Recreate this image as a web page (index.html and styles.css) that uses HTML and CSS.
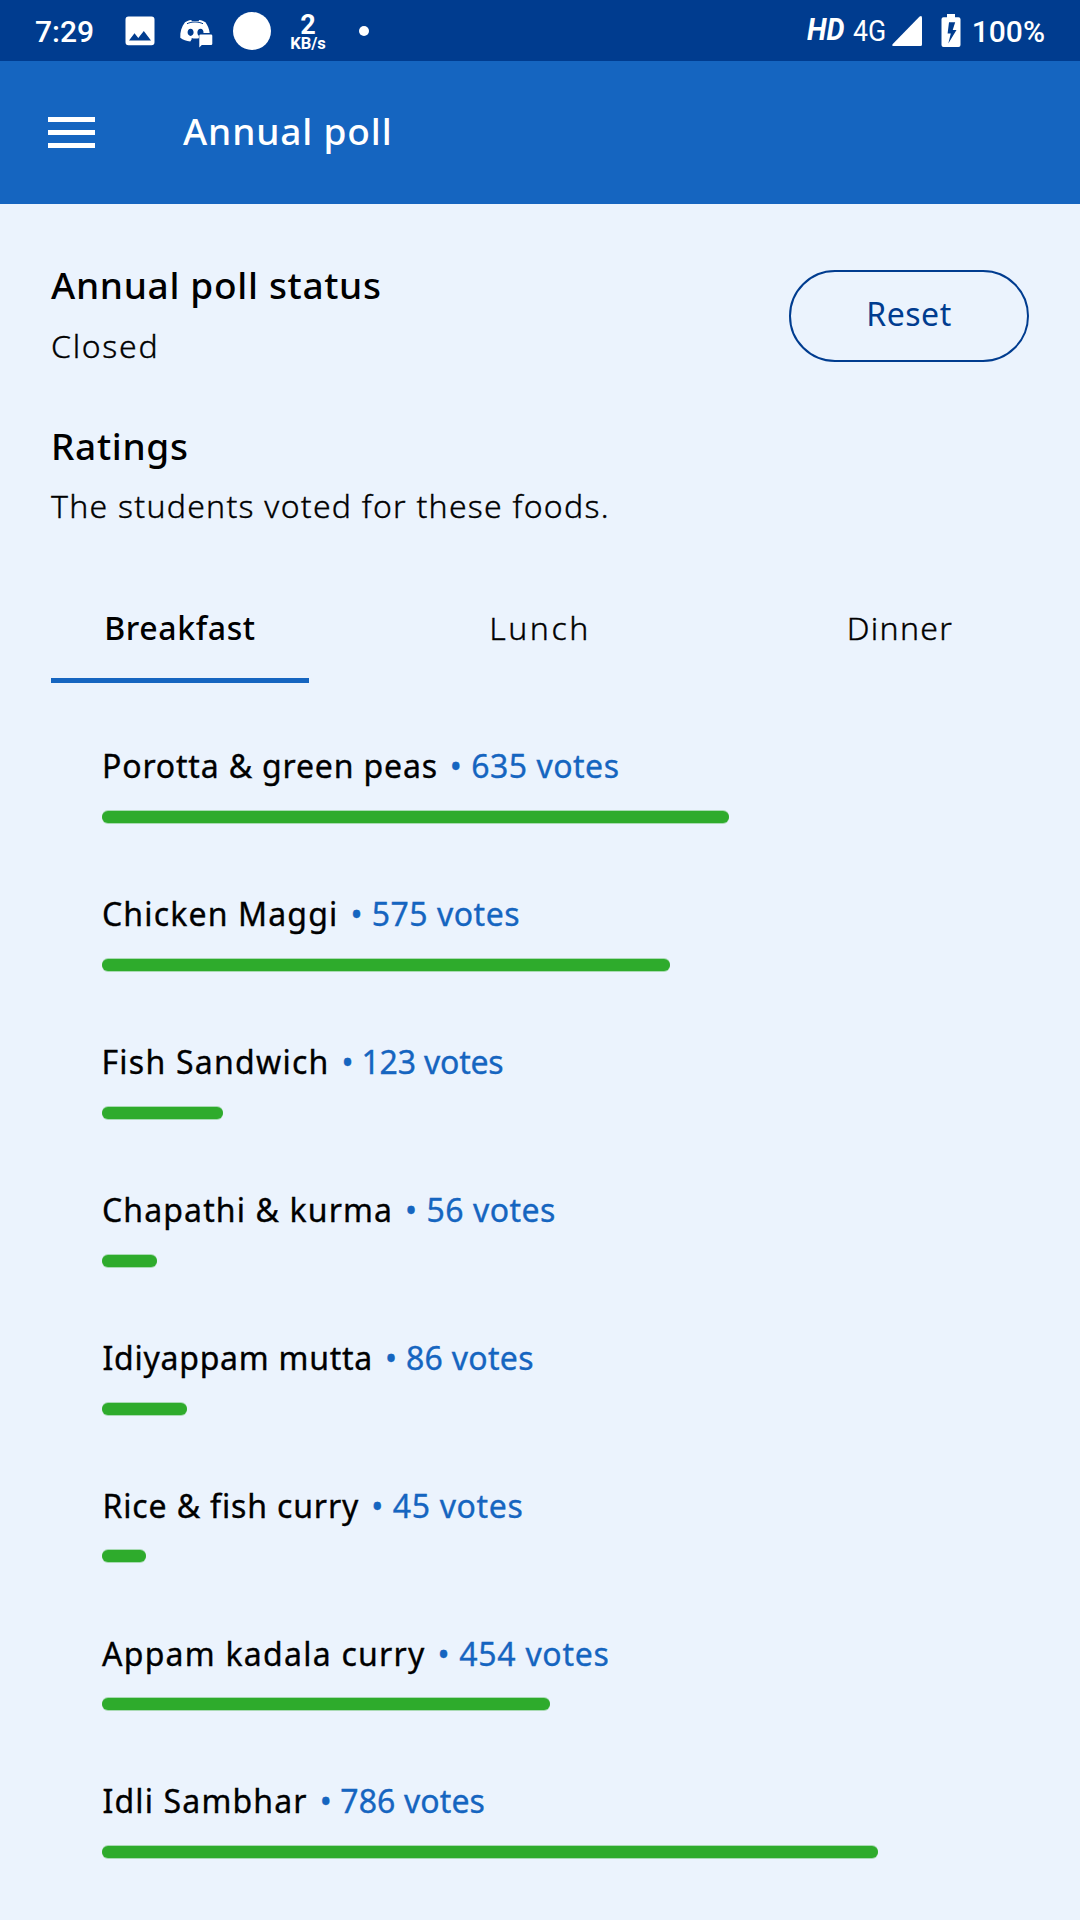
FILE: index.html
```html
<!DOCTYPE html>
<html lang="en">
<head>
<meta charset="utf-8">
<title>Annual poll</title>
<link rel="stylesheet" href="styles.css">
</head>
<body>
<div class="status-bar">
  <div class="status-left">
    <span class="clock">7:29</span>
    <svg class="icon-picture" width="30" height="30" viewBox="0 0 30 30"><path fill="#fff" fill-rule="evenodd" d="M3.5.5h23a3 3 0 0 1 3 3v22.700a3 3 0 0 1-3 3h-23a3 3 0 0 1-3-3V3.500a3 3 0 0 1 3-3zM4 24.500h22l-7.200-9.500-5.500 7-3.800-4.800z"/></svg>
    <svg class="icon-discord" width="33" height="30" viewBox="0 0 33 30">
      <path fill="#fff" fill-rule="evenodd" d="M5 3.300C7 2 9 1.300 11.200 1l.8 1.200c2-.4 4.500-.4 6.500 0l.8-1.200c2.200.3 4.200 1 6.200 2.300 2.200 3.200 3.700 6.700 4.200 10.700H23.500c.2-2.500-1-4.200-2.900-4.200-1.900 0-3.200 1.500-3.200 3.600 0 1.600.5 2.700 1.500 3.300v2.600c-2.500.5-5 .4-7.400-.2l.3 1-1.500 2.300C6.500 22 3 21 .300 18.800 0 13 1.500 8 5 3.300zM10.600 9.700c-1.800 0-3 1.600-3 3.600s1.300 3.600 3 3.600 3-1.600 3-3.600-1.200-3.600-3-3.600z"/>
      <path fill="none" stroke="#003c8f" stroke-width="1" d="M7 4.700c5-2.300 11-2.300 16 0"/>
      <path fill="#fff" d="M20.500 15.500H31a1.300 1.300 0 0 1 1.300 1.300v8a1.300 1.300 0 0 1-1.300 1.300H21.800L19.300 28.500V16.800a1.300 1.300 0 0 1 1.200-1.300z"/>
    </svg>
    <span class="disc"></span>
    <span class="speed"><b class="speed-value">2</b><b class="speed-unit">KB/s</b></span>
    <span class="more-dot"></span>
  </div>
  <div class="status-right">
    <span class="hd">HD</span>
    <span class="network">4G</span>
    <svg class="icon-signal" width="30" height="30" viewBox="0 0 30 30"><path fill="#fff" d="M27.600.600Q30-1 30 2v26.500Q30 30 28.500 30H1.500Q-.8 30 .8 28z"/></svg>
    <svg class="icon-battery" width="20" height="33" viewBox="0 0 20 33"><path fill="#fff" fill-rule="evenodd" d="M6 0h8v3.300h3.500a2 2 0 0 1 2 2V31a2 2 0 0 1-2 2h-15a2 2 0 0 1-2-2V5.300a2 2 0 0 1 2-2H6zM8 8.300 6.600 19.500h3.200L7.300 29.500 15.500 16h-3.800l2.500-7.700z"/></svg>
    <span class="battery-level">100%</span>
  </div>
</div>
<header class="app-bar">
  <div class="menu"><i></i><i></i><i></i></div>
  <h1 class="app-title">Annual poll</h1>
</header>
<main class="content">
  <section class="poll-status">
    <div>
      <h2 class="heading">Annual poll status</h2>
      <p class="body-text closed">Closed</p>
    </div>
    <button class="reset">Reset</button>
  </section>
  <section class="ratings">
    <h2 class="heading">Ratings</h2>
    <p class="body-text note">The students voted for these foods.</p>
  </section>
  <nav class="tabs">
    <a class="tab active">Breakfast</a>
    <a class="tab lunch">Lunch</a>
    <a class="tab dinner">Dinner</a>
  </nav>
  <ul class="foods">
    <li class="food porotta"><div class="label"><span class="name">Porotta &amp; green peas</span><span class="votes">• 635 votes</span></div><div class="bar" style="width:627px"></div></li>
    <li class="food maggi"><div class="label"><span class="name">Chicken Maggi</span><span class="votes">• 575 votes</span></div><div class="bar" style="width:568px"></div></li>
    <li class="food sandwich"><div class="label"><span class="name">Fish Sandwich</span><span class="votes">• 123 votes</span></div><div class="bar" style="width:121px"></div></li>
    <li class="food chapathi"><div class="label"><span class="name">Chapathi &amp; kurma</span><span class="votes">• 56 votes</span></div><div class="bar" style="width:55px"></div></li>
    <li class="food idiyappam"><div class="label"><span class="name">Idiyappam mutta</span><span class="votes">• 86 votes</span></div><div class="bar" style="width:85px"></div></li>
    <li class="food rice"><div class="label"><span class="name">Rice &amp; fish curry</span><span class="votes">• 45 votes</span></div><div class="bar" style="width:44px"></div></li>
    <li class="food appam"><div class="label"><span class="name">Appam kadala curry</span><span class="votes">• 454 votes</span></div><div class="bar" style="width:448px"></div></li>
    <li class="food idli"><div class="label"><span class="name">Idli Sambhar</span><span class="votes">• 786 votes</span></div><div class="bar" style="width:776px"></div></li>
  </ul>
</main>
</body>
</html>
```
FILE: styles.css
```css
* { box-sizing: border-box; margin: 0; padding: 0; }

body {
  width: 1080px;
  height: 1920px;
  overflow: hidden;
  background: #ebf3fd;
  color: #000;
  font-family: "Noto Sans", sans-serif;
  font-size: 32px;
  line-height: 40px;
}

/* System status bar */
.status-bar {
  display: flex;
  justify-content: space-between;
  height: 61px;
  padding: 0 35px;
  background: #003c8f;
  color: #fff;
  font: 500 30px/36px Roboto, sans-serif;
}
.status-left, .status-right { display: flex; align-items: center; height: 61px; }
.status-bar svg { display: block; flex: none; }
.clock { width: 90px; padding-top: 2px; letter-spacing: 0; }
.icon-picture { margin-right: 25px; }
.icon-discord { margin: 6px 20px 0 0; }
.disc { width: 38px; height: 38px; margin-right: 18px; border-radius: 50%; background: #fff; }
.speed { display: flex; flex-direction: column; align-items: center; width: 38px; margin-right: 32px; padding-top: 3px; }
.speed-value { font-size: 27px; line-height: 23px; }
.speed-unit { font-size: 16.5px; line-height: 14px; }
.more-dot { width: 10px; height: 10px; border-radius: 50%; background: #fff; }
.hd { width: 46px; padding-bottom: 2px; font-size: 31px; font-weight: 700; font-style: italic; transform: scaleX(.92); transform-origin: left; }
.network { width: 39px; padding-top: 1px; font-weight: 400; transform: scaleX(.89); transform-origin: left; }
.icon-signal { margin-right: 19px; }
.icon-battery { margin-right: 11px; }
.battery-level { padding-top: 2px; }

/* App bar */
.app-bar {
  display: flex;
  align-items: center;
  height: 143px;
  padding-left: 48px;
  background: #1565c0;
  color: #fff;
}
.menu { display: flex; flex-direction: column; gap: 8px; width: 47px; margin-right: 88px; }
.menu i { height: 5px; background: #fff; }
.app-title { padding-bottom: 3px; font-size: 37px; font-weight: 500; line-height: 48px; letter-spacing: .85px; }

/* Page body */
.content { padding: 57px 51px 0; }
.heading { font-size: 37px; font-weight: 500; line-height: 48px; letter-spacing: .68px; }
.body-text { margin-top: 17px; font-weight: 300; -webkit-text-stroke: .35px #000; }
.closed { letter-spacing: 1.7px; }
.note { margin-top: 16px; letter-spacing: 1.25px; }
.poll-status { display: flex; justify-content: space-between; }
.reset {
  width: 240px;
  height: 92px;
  margin-top: 9px;
  padding-bottom: 5px;
  border: 2.500px solid #003c8f;
  border-radius: 46px;
  background: transparent;
  color: #003c8f;
  font: 400 32px/40px "Noto Sans", sans-serif;
  letter-spacing: .54px;
}
.ratings { margin-top: 56px; }

.tabs { display: flex; justify-content: space-between; margin-top: 82px; }
.tab {
  width: 258px;
  height: 75px;
  border-bottom: 5px solid transparent;
  font-weight: 300;
  text-align: center;
  -webkit-text-stroke: .35px #000;
}
.active { border-color: #1565c0; font-weight: 500; letter-spacing: .6px; -webkit-text-stroke: 0; }
.lunch { letter-spacing: 2.5px; }
.dinner { letter-spacing: 1.3px; }

/* Vote results */
.foods { margin-top: 63.4px; padding-left: 51px; list-style: none; }
.food { height: 147.86px; }
.label { display: flex; gap: 12px; white-space: nowrap; -webkit-text-stroke: .35px currentColor; }
.votes { color: #1565c0; letter-spacing: .5px; -webkit-text-stroke: .35px #1565c0; }
.bar {
  height: 12px;
  margin-top: 24.8px;
  border-radius: 6px;
  background: #2eab2c;
  box-shadow: 0 1px 0 rgba(46, 171, 44, .35), 0 -1px 0 rgba(46, 171, 44, .35);
}
.porotta .name { letter-spacing: .83px; }
.maggi .name { letter-spacing: 1.15px; }
.sandwich .name { margin-left: -.5px; letter-spacing: 1.25px; }
.sandwich .votes { letter-spacing: -.2px; }
.chapathi .name { letter-spacing: 1.12px; }
.idiyappam .name { margin-left: .5px; letter-spacing: .74px; }
.idiyappam .votes { letter-spacing: .3px; }
.rice .name { margin-left: .5px; letter-spacing: .85px; }
.rice .votes { letter-spacing: .65px; }
.appam .name { letter-spacing: 1.25px; }
.appam .votes { letter-spacing: .7px; }
.idli .name { margin-left: .5px; letter-spacing: 1.15px; }
.idli .votes { letter-spacing: .1px; }
```
